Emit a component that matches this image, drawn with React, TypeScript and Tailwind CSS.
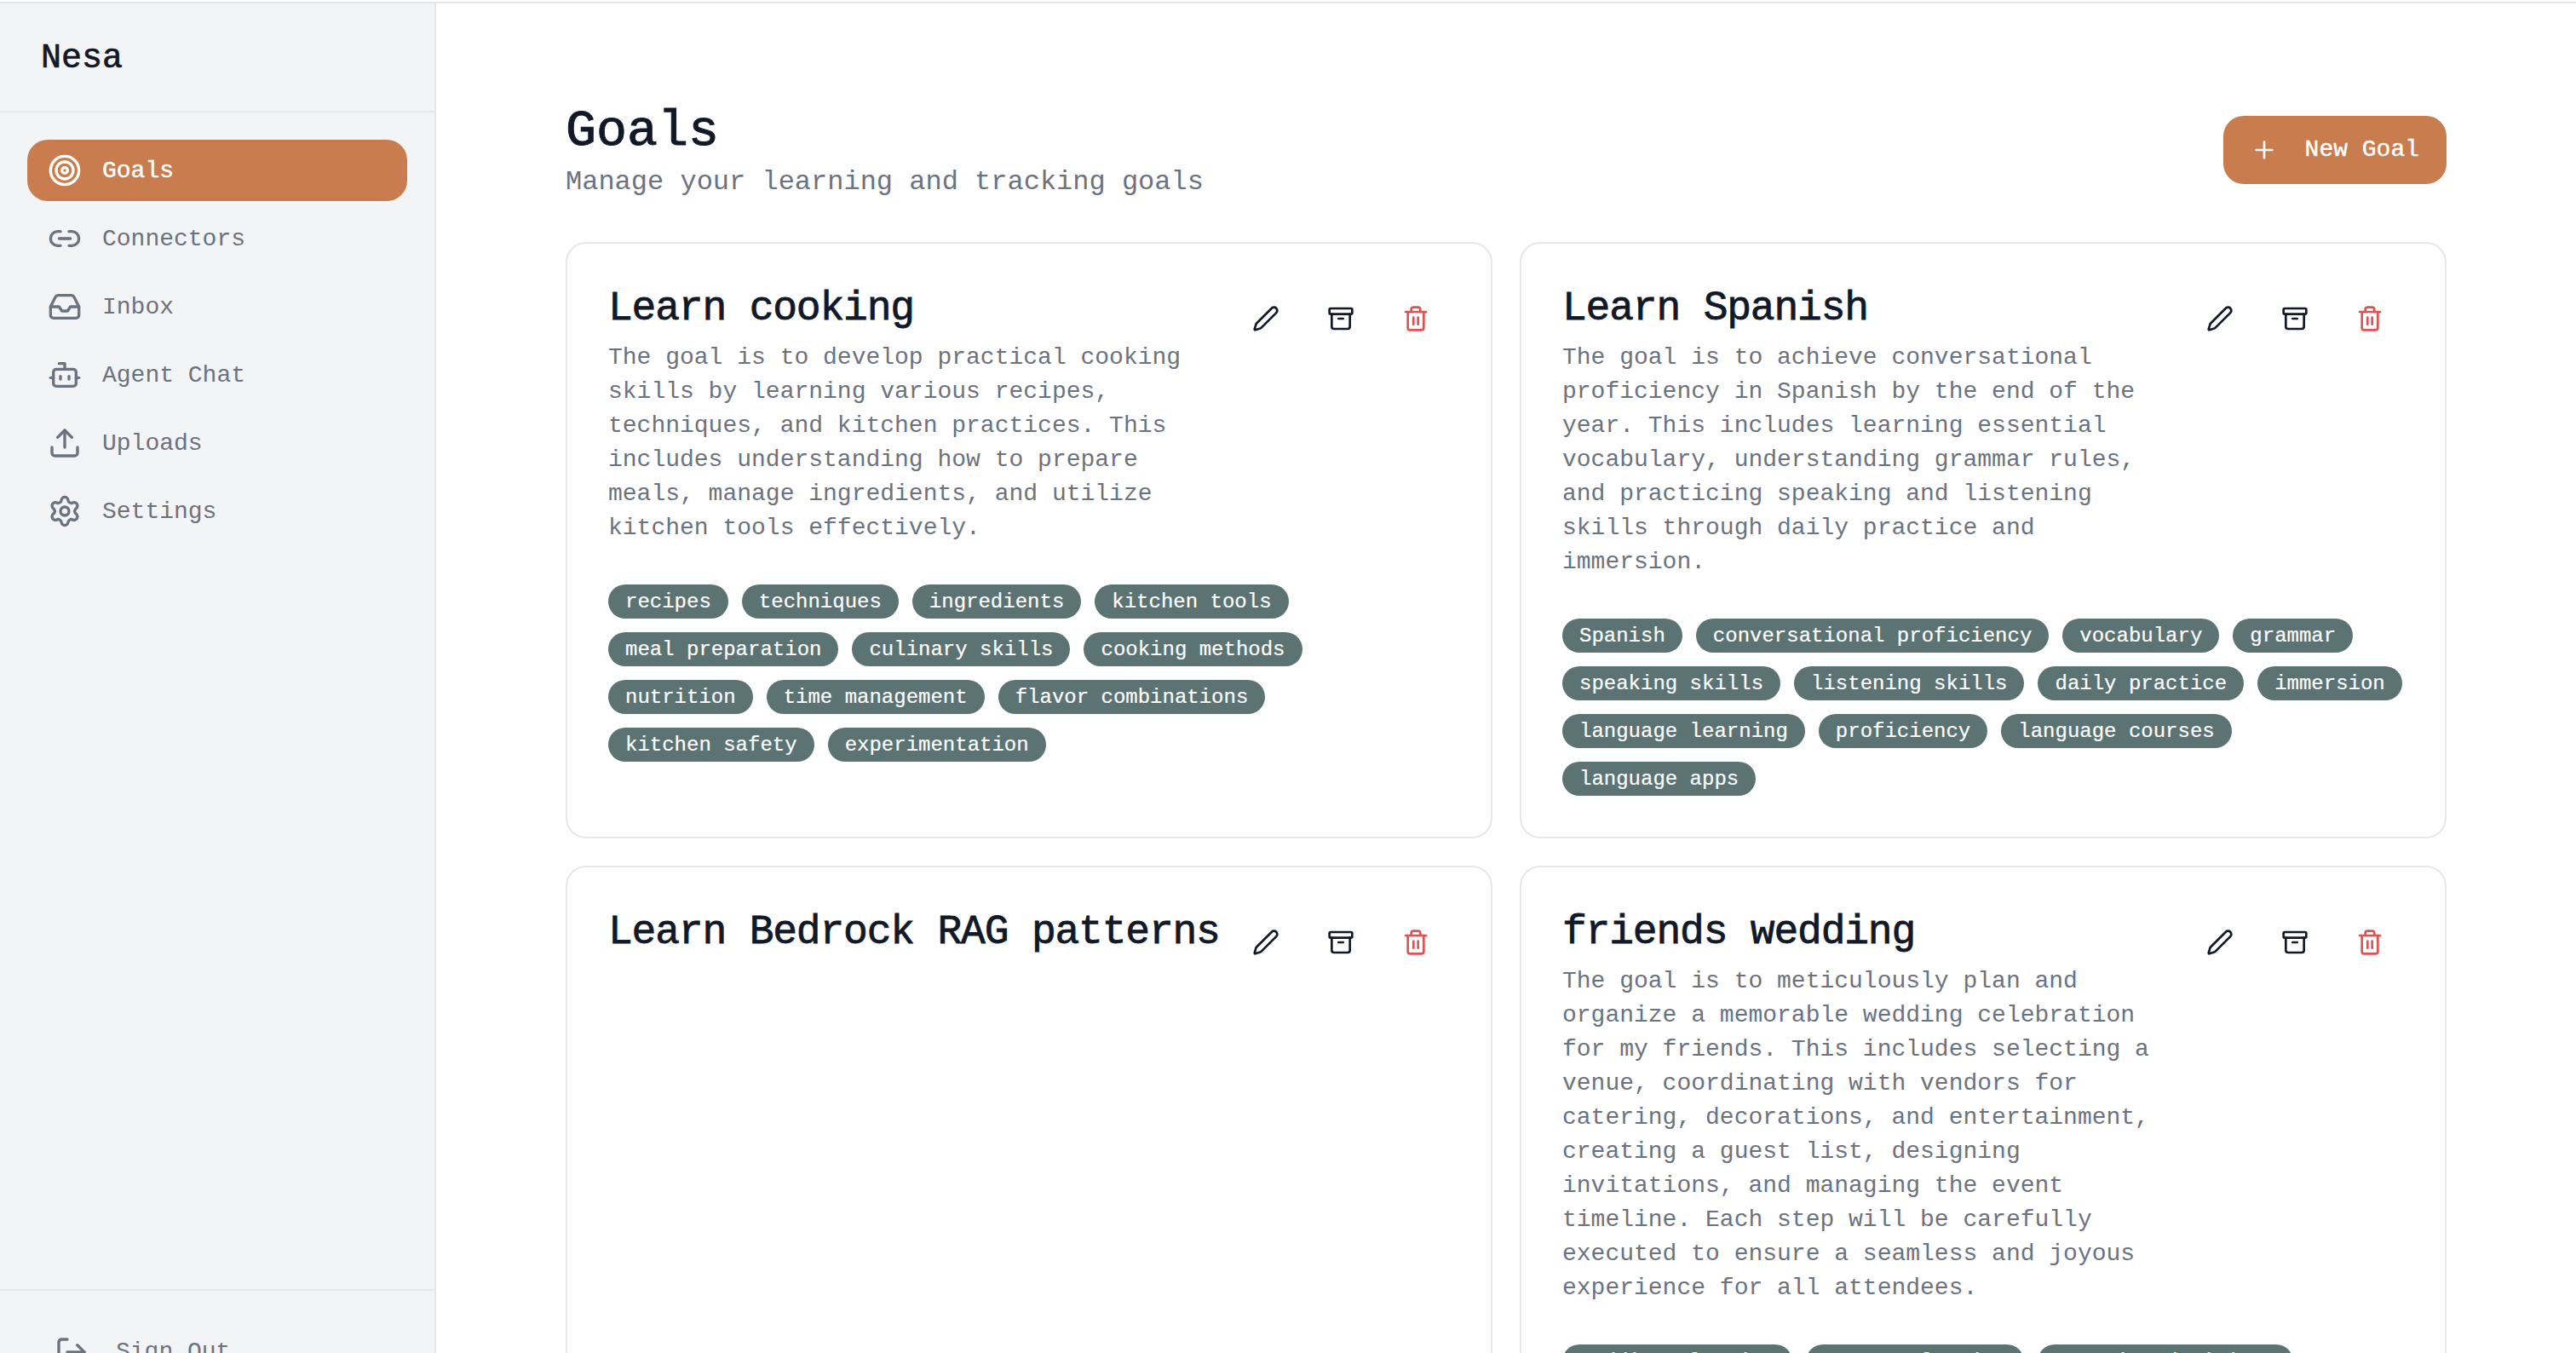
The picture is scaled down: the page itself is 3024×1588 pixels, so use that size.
import { Archive, Bot, Inbox, Link2, LogOut, Pen, Plus, Settings, Target, Trash2, Upload } from "lucide-react";

const nav = [
  { label: "Goals", icon: Target, active: true },
  { label: "Connectors", icon: Link2 },
  { label: "Inbox", icon: Inbox },
  { label: "Agent Chat", icon: Bot },
  { label: "Uploads", icon: Upload },
  { label: "Settings", icon: Settings },
];

const goals = [
  {
    title: "Learn cooking",
    text: "The goal is to develop practical cooking skills by learning various recipes, techniques, and kitchen practices. This includes understanding how to prepare meals, manage ingredients, and utilize kitchen tools effectively.",
    tags: ["recipes", "techniques", "ingredients", "kitchen tools", "meal preparation", "culinary skills", "cooking methods", "nutrition", "time management", "flavor combinations", "kitchen safety", "experimentation"],
  },
  {
    title: "Learn Spanish",
    text: "The goal is to achieve conversational proficiency in Spanish by the end of the year. This includes learning essential vocabulary, understanding grammar rules, and practicing speaking and listening skills through daily practice and immersion.",
    tags: ["Spanish", "conversational proficiency", "vocabulary", "grammar", "speaking skills", "listening skills", "daily practice", "immersion", "language learning", "proficiency", "language courses", "language apps"],
  },
  { title: "Learn Bedrock RAG patterns", text: "", tags: [] },
  {
    title: "friends wedding",
    text: "The goal is to meticulously plan and organize a memorable wedding celebration for my friends. This includes selecting a venue, coordinating with vendors for catering, decorations, and entertainment, creating a guest list, designing invitations, and managing the event timeline. Each step will be carefully executed to ensure a seamless and joyous experience for all attendees.",
    tags: ["wedding planning", "venue selection", "catering decisions"],
  },
];

function GoalCard({ goal }: { goal: (typeof goals)[number] }) {
  return (
    <div className="rounded-3xl border-2 border-[#e5e7eb] bg-white p-12">
      <div className="flex items-start">
        <div className="flex-1">
          <h2 className="mb-[10px] text-5xl leading-14 tracking-tight text-[#111827] [-webkit-text-stroke:0.8px_#111827]">{goal.title}</h2>
          {goal.text && <p className="text-[28px] leading-10 text-[#6b7280]">{goal.text}</p>}
        </div>
        <div className="flex gap-2 text-[#111827]">
          <button className="flex h-20 w-20 items-center justify-center">
            <Pen size={32} />
          </button>
          <button className="flex h-20 w-20 items-center justify-center">
            <Archive size={32} />
          </button>
          <button className="flex h-20 w-20 items-center justify-center text-[#e15252]">
            <Trash2 size={32} />
          </button>
        </div>
      </div>
      {goal.tags.length > 0 && (
        <div className="mt-[46px] flex flex-wrap gap-4">
          {goal.tags.map((tag) => (
            <span key={tag} className="h-10 rounded-full bg-[#5c7373] px-5 text-2xl leading-[42px] text-white [-webkit-text-stroke:0.2px_#ffffff]">
              {tag}
            </span>
          ))}
        </div>
      )}
    </div>
  );
}

export default function App() {
  return (
    <div className="h-[1588px] overflow-hidden bg-white pt-0.5 font-['Liberation_Mono',monospace]">
      <div className="flex border-t-2 border-[#e6e3ef]">
        {/* SIDEBAR */}
        <aside className="flex h-[1655px] w-[512px] shrink-0 flex-col border-r-2 border-[#e5e7eb] bg-[#f3f4f6]">
          <div className="flex h-[128px] items-center border-b-2 border-[#e5e7eb] px-12 pt-1">
            <span className="text-[40px] text-[#111827] [-webkit-text-stroke:0.7px_#111827]">Nesa</span>
          </div>
          <nav className="flex flex-col gap-2 px-8 pt-8">
            {nav.map((item) => (
              <a
                key={item.label}
                className={
                  item.active
                    ? "flex h-[72px] items-center gap-6 rounded-3xl bg-[#c97d4e] px-6 text-[28px] text-white [-webkit-text-stroke:0.4px_#ffffff]"
                    : "flex h-[72px] items-center gap-6 rounded-3xl px-6 text-[28px] text-[#6b7280]"
                }
              >
                <item.icon size={40} />
                <span className="pt-0.5">{item.label}</span>
              </a>
            ))}
          </nav>
          <div className="mt-auto border-t-2 border-[#e5e7eb] p-8">
            <button className="flex h-20 items-center gap-8 px-8 text-[28px] text-[#6b7280]">
              <LogOut size={40} />
              Sign Out
            </button>
          </div>
        </aside>

        {/* MAIN */}
        <main className="flex-1 px-[152px] pt-[112px]">
          <div className="mb-12 flex h-[120px] items-start justify-between">
            <div className="pt-[2px]">
              <h1 className="text-[60px] leading-[72px] text-[#111827] [-webkit-text-stroke:1px_#111827]">Goals</h1>
              <p className="text-[32px] leading-12 text-[#6b7280]">Manage your learning and tracking goals</p>
            </div>
            <button className="mt-5 flex h-20 items-center gap-8 rounded-3xl bg-[#c97d4e] px-8 text-[28px] text-white [-webkit-text-stroke:0.4px_#ffffff]">
              <Plus size={32} />
              New Goal
            </button>
          </div>
          <div className="grid grid-cols-2 gap-8">
            {goals.map((goal) => (
              <GoalCard key={goal.title} goal={goal} />
            ))}
          </div>
        </main>
      </div>
    </div>
  );
}
